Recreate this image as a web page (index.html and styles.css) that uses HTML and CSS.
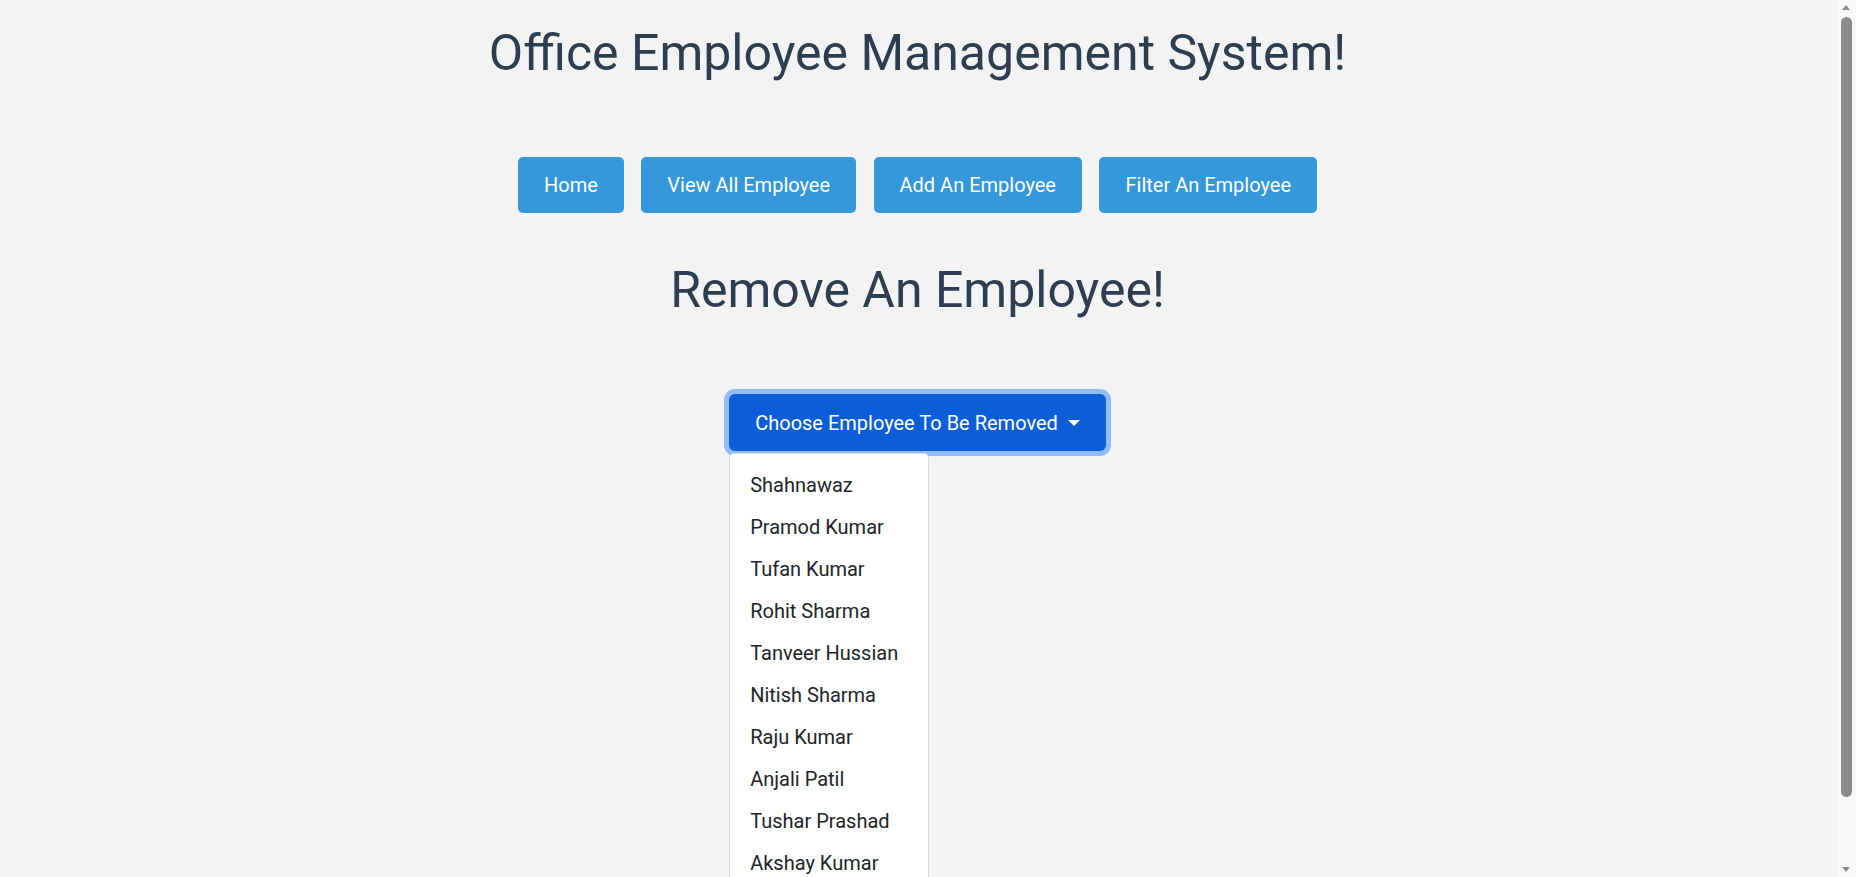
FILE: index.html
```html
<!DOCTYPE html>
<html lang="en">
<head>
<meta charset="utf-8">
<title>Office Employee Management System</title>
<link rel="stylesheet" href="styles.css">
</head>
<body>
<div class="page">
  <h1 class="title">Office Employee Management System!</h1>
  <nav class="nav">
    <a class="nav-btn" href="#">Home</a>
    <a class="nav-btn" href="#">View All Employee</a>
    <a class="nav-btn" href="#">Add An Employee</a>
    <a class="nav-btn" href="#">Filter An Employee</a>
  </nav>
  <h2 class="section-title">Remove An Employee!</h2>
  <div class="dropdown">
    <button class="dropdown-toggle" type="button">Choose Employee To Be Removed <span class="caret"></span></button>
    <ul class="dropdown-menu">
      <li><a class="dropdown-item" href="#">Shahnawaz</a></li>
      <li><a class="dropdown-item" href="#">Pramod Kumar</a></li>
      <li><a class="dropdown-item" href="#">Tufan Kumar</a></li>
      <li><a class="dropdown-item" href="#">Rohit Sharma</a></li>
      <li><a class="dropdown-item" href="#">Tanveer Hussian</a></li>
      <li><a class="dropdown-item" href="#">Nitish Sharma</a></li>
      <li><a class="dropdown-item" href="#">Raju Kumar</a></li>
      <li><a class="dropdown-item" href="#">Anjali Patil</a></li>
      <li><a class="dropdown-item" href="#">Tushar Prashad</a></li>
      <li><a class="dropdown-item" href="#">Akshay Kumar</a></li>
    </ul>
  </div>
</div>
<div class="scrollbar" aria-hidden="true">
  <span class="scroll-arrow scroll-arrow-up"></span>
  <span class="scroll-thumb"></span>
  <span class="scroll-arrow scroll-arrow-down"></span>
</div>
</body>
</html>
```
FILE: styles.css
```css
html, body {
  margin: 0;
  padding: 0;
}

body {
  background: #f3f3f3;
  font-family: Roboto, "Liberation Sans", Arial, sans-serif;
  color: #212529;
}

.page {
  box-sizing: border-box;
  min-height: 962px;
  padding-top: 23px;
  padding-right: 21px;
  display: flex;
  flex-direction: column;
  align-items: center;
}

.title,
.section-title {
  margin: 0;
  font-size: 50px;
  font-weight: 400;
  line-height: 60px;
  color: #2c3e50;
  text-align: center;
}

.nav {
  margin-top: 74px;
  display: flex;
  gap: 17.5px;
}

.nav-btn {
  display: block;
  padding: 13px 26px;
  font-size: 20px;
  line-height: 30px;
  color: #fff;
  background: #3498db;
  border-radius: 5px;
  text-decoration: none;
}

.section-title {
  margin-top: 47px;
}

.dropdown {
  position: relative;
  margin-top: 74px;
}

.dropdown-toggle {
  display: block;
  margin: 0;
  padding: 13.5px 26px;
  border: 0;
  border-radius: 6px;
  font-family: inherit;
  font-size: 20px;
  line-height: 30px;
  color: #fff;
  background: #0b5ed7;
  box-shadow: 0 0 0 5px #92bbf8;
  cursor: pointer;
}

.caret {
  display: inline-block;
  margin-left: 5px;
  vertical-align: 4px;
  border-top: 6px solid #fff;
  border-left: 6px solid transparent;
  border-right: 6px solid transparent;
}

.dropdown-menu {
  position: absolute;
  top: 100%;
  left: 0;
  z-index: 2;
  box-sizing: border-box;
  width: 200px;
  margin: 2px 0 0;
  padding: 10px 0;
  list-style: none;
  background: #fff;
  border: 1px solid rgba(0, 0, 0, 0.15);
  border-radius: 5px;
}

.dropdown-item {
  display: block;
  padding: 5px 20px;
  font-size: 20px;
  line-height: 32px;
  color: #212529;
  text-decoration: none;
  white-space: nowrap;
}

/* drawn page scrollbar */
.scrollbar {
  position: fixed;
  top: 0;
  right: 0;
  bottom: 0;
  width: 19px;
  background: #f9f9f9;
  border-left: 1px solid #ececec;
  z-index: 10;
}

.scroll-thumb {
  position: absolute;
  top: 17px;
  left: 4px;
  width: 11px;
  height: 780px;
  background: #8b8b8b;
  border-radius: 6px;
}

.scroll-arrow {
  position: absolute;
  left: 5px;
  width: 0;
  height: 0;
  border-left: 4.5px solid transparent;
  border-right: 4.5px solid transparent;
}

.scroll-arrow-up {
  top: 5px;
  border-bottom: 5px solid #8b8b8b;
}

.scroll-arrow-down {
  bottom: 5px;
  border-top: 5px solid #8b8b8b;
}
```
